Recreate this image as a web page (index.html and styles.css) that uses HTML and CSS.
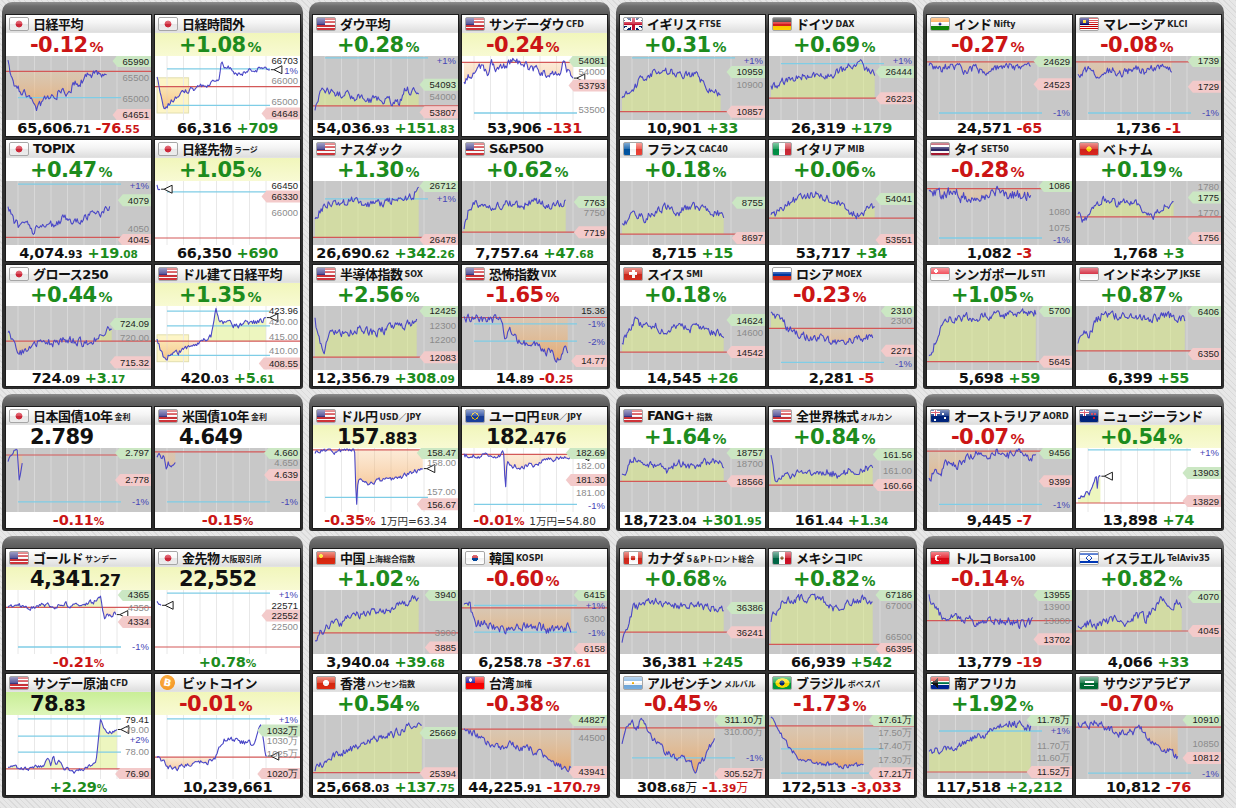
FILE: index.html
```html
<!DOCTYPE html>
<html lang="ja">
<head>
<meta charset="utf-8">
<title>世界の株価</title>
<link rel="stylesheet" href="styles.css">
</head>
<body>
<main class="board">

<section class="sec">
  <div class="grp">
    <div class="card"><h3 class="ttl"><span class="fl f-jp"></span>日経平均</h3><p class="hd"><b class="dn">-0.12<i>%</i></b></p>
      <div class="ch" data-a="0:8 4:40 10:55 18:62 25:85 32:70 38:62 42:65 45:55 52:60 58:45 65:40 72:30 78:25 84:30 88:28" data-r="24" data-y="65" data-f="1" data-l="65990@8h 65500@33m 65000@66m 64651@93l"></div>
      <p class="bt"><b>65,606<i>.71</i></b> <b class="dn">-76<i>.55</i></b></p></div>
    <div class="card"><h3 class="ttl"><span class="fl f-jp"></span>日経時間外</h3><p class="hd y"><b class="up">+1.08<i>%</i></b></p>
      <div class="ch w" data-a="0:33 3:60 6:84 12:72 20:60 30:52 45:45 55:40 57:8 60:20 63:12 68:28 75:30 80:22 90:21 100:20" data-n="3" data-r="48" data-y="20,77" data-m="1" data-b="0,28,34,89" data-f="d" data-l="66703@5k 1%@22p 66000@39m 65000@71m 64648@90l"></div>
      <p class="bt"><b>66,316</b> <b class="up">+709</b></p></div>
    <div class="card"><h3 class="ttl"><span class="fl f-jp"></span>TOPIX</h3><p class="hd"><b class="up">+0.47<i>%</i></b></p>
      <div class="ch" data-a="0:40 5:62 10:72 15:62 22:78 30:65 40:70 50:58 60:62 70:55 80:50 90:45" data-r="88" data-y="5" data-l="+1%@4p 4079@30h 4050@74m 4045@93l"></div>
      <p class="bt"><b>4,074<i>.93</i></b> <b class="up">+19<i>.08</i></b></p></div>
    <div class="card"><h3 class="ttl"><span class="fl f-jp"></span>日経先物<small>ラージ</small></h3><p class="hd y"><b class="up">+1.05<i>%</i></b></p>
      <div class="ch w" data-a="0:6 1:14 3:12" data-n="1" data-r="89" data-y="17" data-m="1" data-l="66450@6k 66330@24l 66000@50m"></div>
      <p class="bt"><b>66,350</b> <b class="up">+690</b></p></div>
    <div class="card"><h3 class="ttl"><span class="fl f-jp"></span>グロース250</h3><p class="hd"><b class="up">+0.44<i>%</i></b></p>
      <div class="ch" data-a="0:40 6:65 12:72 20:60 30:55 40:58 50:50 60:55 70:60 78:50 85:42 92:32" data-r="55" data-f="1" data-l="724.09@28h 720.00@50m 715.32@88l"></div>
      <p class="bt"><b>724<i>.09</i></b> <b class="up">+3<i>.17</i></b></p></div>
    <div class="card"><h3 class="ttl"><span class="fl f-us"></span>ドル建て日経平均</h3><p class="hd y"><b class="up">+1.35<i>%</i></b></p>
      <div class="ch w" data-a="0:50 3:70 7:87 12:75 20:72 30:62 40:55 48:45 50:30 52:3 55:25 60:28 70:30 80:27 90:25 97:21" data-n="3.5" data-r="55" data-y="8,31,77" data-f="1" data-m="1" data-b="0,28,45,87" data-l="423.96@4k 420.00@24m 415.00@48m 410.00@70m 408.55@90l"></div>
      <p class="bt"><b>420<i>.03</i></b> <b class="up">+5<i>.61</i></b></p></div>
  </div>

  <div class="grp">
    <div class="card"><h3 class="ttl"><span class="fl f-us"></span>ダウ平均</h3><p class="hd"><b class="up">+0.28<i>%</i></b></p>
      <div class="ch" data-a="0:82 3:65 8:55 15:58 30:62 45:68 60:70 75:74 80:52 88:56 92:58" data-r="78" data-y="3" data-f="1" data-l="+1%@3p 54093@45h 54000@63m 53807@88l"></div>
      <p class="bt"><b>54,036<i>.93</i></b> <b class="up">+151<i>.83</i></b></p></div>
    <div class="card"><h3 class="ttl"><span class="fl f-us"></span>サンデーダウ<small>CFD</small></h3><p class="hd y"><b class="dn">-0.24<i>%</i></b></p>
      <div class="ch w" data-a="0:37 8:25 14:20 17:9 20:30 24:12 30:20 38:15 45:6 55:15 65:22 77:30 85:25 88:12 92:25 97:30" data-n="5" data-r="10" data-y="89" data-f="1" data-m="1" data-l="54081@6h 54000@24m 53793@46l 53500@84m"></div>
      <p class="bt"><b>53,906</b> <b class="dn">-131</b></p></div>
    <div class="card"><h3 class="ttl"><span class="fl f-us"></span>ナスダック</h3><p class="hd"><b class="up">+1.30<i>%</i></b></p>
      <div class="ch" data-a="0:55 5:45 12:35 20:40 30:30 40:32 50:38 60:35 70:30 80:28 88:20 92:10" data-r="88" data-y="28" data-f="1" data-l="26712@6h +1%@28p 26478@92l"></div>
      <p class="bt"><b>26,690<i>.62</i></b> <b class="up">+342<i>.26</i></b></p></div>
    <div class="card"><h3 class="ttl"><span class="fl f-us"></span>S&amp;P500</h3><p class="hd"><b class="up">+0.62<i>%</i></b></p>
      <div class="ch" data-a="0:70 5:40 12:35 20:45 30:40 40:35 50:42 60:30 70:35 80:38 90:32" data-r="80" data-f="1" data-l="7763@33h 7750@50m 7719@80l"></div>
      <p class="bt"><b>7,757<i>.64</i></b> <b class="up">+47<i>.68</i></b></p></div>
    <div class="card"><h3 class="ttl"><span class="fl f-us"></span>半導体指数<small>SOX</small></h3><p class="hd"><b class="up">+2.56<i>%</i></b></p>
      <div class="ch" data-a="0:12 3:55 8:68 12:45 20:40 30:42 40:35 50:40 60:38 70:33 80:30 90:22" data-n="5.5" data-r="80" data-f="1" data-l="12425@6h 12300@30m 12200@53m 12083@80l"></div>
      <p class="bt"><b>12,356<i>.79</i></b> <b class="up">+308<i>.09</i></b></p></div>
    <div class="card"><h3 class="ttl"><span class="fl f-us"></span>恐怖指数<small>VIX</small></h3><p class="hd"><b class="dn">-1.65<i>%</i></b></p>
      <div class="ch" data-a="0:22 10:18 20:25 30:15 34:20 36:55 40:35 45:50 55:58 65:62 75:72 82:80 88:68 92:70" data-n="5.5" data-r="18" data-y="28,55" data-f="1" data-l="15.36@3k -1%@28p -2%@55p 14.77@86l"></div>
      <p class="bt"><b>14<i>.89</i></b> <b class="dn">-0<i>.25</i></b></p></div>
  </div>

  <div class="grp">
    <div class="card"><h3 class="ttl"><span class="fl f-gb"></span>イギリス<small>FTSE</small></h3><p class="hd"><b class="up">+0.31<i>%</i></b></p>
      <div class="ch" data-a="0:70 8:55 15:40 25:28 35:22 45:25 55:30 65:28 72:40 80:55 88:58" data-r="87" data-y="3" data-f="1" data-l="+1%@3p 10959@25h 10900@45m 10857@87l"></div>
      <p class="bt"><b>10,901</b> <b class="up">+33</b></p></div>
    <div class="card"><h3 class="ttl"><span class="fl f-de"></span>ドイツ<small>DAX</small></h3><p class="hd"><b class="up">+0.69<i>%</i></b></p>
      <div class="ch" data-a="0:50 8:40 20:35 35:28 50:30 60:25 70:15 78:10 85:25 92:30" data-r="66" data-y="12" data-f="1" data-l="+1%@5p 26444@25h 26223@66l"></div>
      <p class="bt"><b>26,319</b> <b class="up">+179</b></p></div>
    <div class="card"><h3 class="ttl"><span class="fl f-fr"></span>フランス<small>CAC40</small></h3><p class="hd"><b class="up">+0.18<i>%</i></b></p>
      <div class="ch" data-a="0:70 10:50 20:58 30:45 40:42 50:50 60:38 70:45 80:48 90:52" data-r="83" data-f="1" data-l="8755@34h 8697@89l"></div>
      <p class="bt"><b>8,715</b> <b class="up">+15</b></p></div>
    <div class="card"><h3 class="ttl"><span class="fl f-it"></span>イタリア<small>MIB</small></h3><p class="hd"><b class="up">+0.06<i>%</i></b></p>
      <div class="ch" data-a="0:55 10:45 20:30 30:25 40:20 50:28 60:35 70:50 78:55 85:45 92:40" data-r="58" data-f="1" data-l="54041@28h 53551@92l"></div>
      <p class="bt"><b>53,717</b> <b class="up">+34</b></p></div>
    <div class="card"><h3 class="ttl"><span class="fl f-ch"></span>スイス<small>SMI</small></h3><p class="hd"><b class="up">+0.18<i>%</i></b></p>
      <div class="ch" data-a="0:60 5:40 12:20 20:35 30:30 40:45 50:28 60:35 70:30 80:40 90:45" data-r="72" data-f="1" data-l="14624@22h 14600@41m 14542@72l"></div>
      <p class="bt"><b>14,545</b> <b class="up">+26</b></p></div>
    <div class="card"><h3 class="ttl"><span class="fl f-ru"></span>ロシア<small>MOEX</small></h3><p class="hd"><b class="dn">-0.23<i>%</i></b></p>
      <div class="ch" data-a="0:10 8:20 15:35 25:45 40:50 55:55 65:58 75:52 85:48 90:50" data-r="35" data-y="88" data-f="1" data-l="2310@5h 2300@23m 2271@70l -1%@90p"></div>
      <p class="bt"><b>2,281</b> <b class="dn">-5</b></p></div>
  </div>

  <div class="grp">
    <div class="card"><h3 class="ttl"><span class="fl f-in"></span>インド<small>Nifty</small></h3><p class="hd"><b class="dn">-0.27<i>%</i></b></p>
      <div class="ch" data-a="0:15 10:20 20:15 30:22 40:18 50:25 60:20 70:15 80:22 90:15" data-r="9" data-y="89" data-f="1" data-l="24629@8h 24523@44l -1%@89p"></div>
      <p class="bt"><b>24,571</b> <b class="dn">-65</b></p></div>
    <div class="card"><h3 class="ttl"><span class="fl f-my"></span>マレーシア<small>KLCI</small></h3><p class="hd"><b class="dn">-0.08<i>%</i></b></p>
      <div class="ch" data-a="0:28 10:20 20:30 30:22 40:28 50:20 60:25 70:18 80:20 83:18" data-r="9" data-y="89" data-f="1" data-l="1739@5h 1729@48l -1%@89p"></div>
      <p class="bt"><b>1,736</b> <b class="dn">-1</b></p></div>
    <div class="card"><h3 class="ttl"><span class="fl f-th"></span>タイ<small>SET50</small></h3><p class="hd"><b class="dn">-0.28<i>%</i></b></p>
      <div class="ch" data-a="0:14 10:22 20:18 30:25 40:20 50:22 60:18 70:22 80:20 90:22" data-n="7" data-r="12" data-y="89" data-f="1" data-l="1086@6h 1080@47m 1075@72m -1%@91p"></div>
      <p class="bt"><b>1,082</b> <b class="dn">-3</b></p></div>
    <div class="card"><h3 class="ttl"><span class="fl f-vn"></span>ベトナム</h3><p class="hd"><b class="up">+0.19<i>%</i></b></p>
      <div class="ch" data-a="0:50 5:65 10:60 15:35 25:28 35:35 45:30 55:40 62:50 68:55 75:40 82:35 85:38" data-r="56" data-f="1" data-l="1780@8m 1775@26h 1770@50m 1756@89l"></div>
      <p class="bt"><b>1,768</b> <b class="up">+3</b></p></div>
    <div class="card"><h3 class="ttl"><span class="fl f-sg"></span>シンガポール<small>STI</small></h3><p class="hd"><b class="up">+1.05<i>%</i></b></p>
      <div class="ch" data-a="0:75 4:65 8:40 12:22 20:20 35:18 50:16 65:15 80:12 95:10" data-r="87" data-f="1" data-l="5700@5h 5645@87l"></div>
      <p class="bt"><b>5,698</b> <b class="up">+59</b></p></div>
    <div class="card"><h3 class="ttl"><span class="fl f-id"></span>インドネシア<small>JKSE</small></h3><p class="hd"><b class="up">+0.87<i>%</i></b></p>
      <div class="ch" data-a="0:55 5:35 10:45 15:25 22:12 35:15 50:18 65:20 80:15 90:20 95:22" data-r="70" data-f="1" data-l="6406@8h 6350@75l"></div>
      <p class="bt"><b>6,399</b> <b class="up">+55</b></p></div>
  </div>
</section>

<section class="sec">
  <div class="grp">
    <div class="card"><h3 class="ttl"><span class="fl f-jp"></span>日本国債10年<small>金利</small></h3><p class="hd"><b class="k">2.789</b></p>
      <div class="ch" data-a="0:20 5:5 8:0 10:50 12:30 13:20" data-n="1.5" data-r="11" data-y="84" data-f="1" data-l="2.797@5h 2.778@50l -1%@84p"></div>
      <p class="bt"><b class="dn">-0.11<i>%</i></b></p></div>
    <div class="card"><h3 class="ttl"><span class="fl f-us"></span>米国債10年<small>金利</small></h3><p class="hd"><b class="k">4.649</b></p>
      <div class="ch" data-a="0:12 2:5 4:15 6:8 8:35 10:22 12:30 14:25 17:20" data-n="2.5" data-r="6" data-y="84" data-f="1" data-l="4.660@5h 4.650@22m 4.639@42l -1%@84p"></div>
      <p class="bt"><b class="dn">-0.15<i>%</i></b></p></div>
  </div>
  <div class="grp">
    <div class="card"><h3 class="ttl"><span class="fl f-us"></span>ドル円<small>USD／JPY</small></h3><p class="hd y"><b class="k">157<small>.883</small></b></p>
      <div class="ch w" data-a="0:5 10:4 20:6 30:3 35:5 36:60 37:88 38:45 40:50 45:55 55:52 65:48 75:50 80:40 90:36 96:32" data-n="3" data-r="3" data-y="77" data-f="1" data-m="1" data-l="158.47@3h 158.00@22m 157.00@68m 156.67@88l"></div>
      <p class="bt"><b class="dn">-0.35<i>%</i></b> <span class="fx">1万円=63.34</span></p></div>
    <div class="card"><h3 class="ttl"><span class="fl f-eu"></span>ユーロ円<small>EUR／JPY</small></h3><p class="hd y"><b class="k">182<small>.476</small></b></p>
      <div class="ch w" data-a="0:12 10:13 20:11 30:12 35:8 36:40 37:60 38:18 42:28 50:30 58:26 62:28 70:18 80:17 90:14 100:12" data-n="3" data-r="10" data-y="88" data-f="1" data-m="1" data-l="182.69@4h 182.00@27m 181.30@50l 181.00@69m -1%@90p"></div>
      <p class="bt"><b class="dn">-0.01<i>%</i></b> <span class="fx">1万円=54.80</span></p></div>
  </div>
  <div class="grp">
    <div class="card"><h3 class="ttl"><span class="fl f-us"></span>FANG+<small>指数</small></h3><p class="hd"><b class="up">+1.64<i>%</i></b></p>
      <div class="ch" data-a="0:45 5:30 10:15 20:25 30:30 40:35 50:22 60:30 70:25 80:20 90:28" data-n="5" data-r="52" data-f="1" data-l="18757@5h 18700@24m 18566@52l"></div>
      <p class="bt"><b>18,723<i>.04</i></b> <b class="up">+301<i>.95</i></b></p></div>
    <div class="card"><h3 class="ttl"><span class="fl f-us"></span>全世界株式<small>オルカン</small></h3><p class="hd"><b class="up">+0.84<i>%</i></b></p>
      <div class="ch" data-a="0:15 4:50 10:45 20:42 30:40 40:45 50:38 60:42 70:35 80:30 90:32" data-r="58" data-f="1" data-l="161.56@10h 161.00@35m 160.66@58l"></div>
      <p class="bt"><b>161<i>.44</i></b> <b class="up">+1<i>.34</i></b></p></div>
  </div>
  <div class="grp">
    <div class="card"><h3 class="ttl"><span class="fl f-au"></span>オーストラリア<small>AORD</small></h3><p class="hd"><b class="dn">-0.07<i>%</i></b></p>
      <div class="ch" data-a="0:50 5:35 10:40 15:25 20:20 25:30 30:22 40:8 50:10 60:6 70:12 80:6 88:15 95:12" data-r="5" data-y="88" data-f="1" data-l="9456@5h 9399@52l -1%@88p"></div>
      <p class="bt"><b>9,445</b> <b class="dn">-7</b></p></div>
    <div class="card"><h3 class="ttl"><span class="fl f-nz"></span>ニュージーランド</h3><p class="hd y"><b class="up">+0.54<i>%</i></b></p>
      <div class="ch w" data-a="0:80 5:75 8:70 10:72 12:60 14:50 16:42 17:65 18:45 20:42" data-n="3" data-r="86" data-y="3" data-f="1" data-m="1" data-l="+1%@3p 13903@39h 13829@83l"></div>
      <p class="bt"><b>13,898</b> <b class="up">+74</b></p></div>
  </div>
</section>

<section class="sec">
  <div class="grp">
    <div class="card"><h3 class="ttl"><span class="fl f-us"></span>ゴールド<small>サンデー</small></h3><p class="hd y"><b class="k">4,341<small>.27</small></b></p>
      <div class="ch w" data-a="0:28 10:25 20:27 30:24 40:26 50:22 60:24 70:20 78:18 82:5 84:30 86:45 88:40 92:38 96:36" data-n="3" data-r="27" data-y="89" data-f="1" data-m="1" data-l="4365@5h 4350@27m 4334@50l -1%@89p"></div>
      <p class="bt"><b class="dn">-0.21<i>%</i></b></p></div>
    <div class="card"><h3 class="ttl"><span class="fl f-jp"></span>金先物<small>大阪取引所</small></h3><p class="hd y"><b class="k">22,552</b></p>
      <div class="ch w" data-a="0:18 2:22 4:24" data-n="0.8" data-r="89" data-y="5" data-m="1" data-l="+1%@3p 22571@24k 22552@40l 22500@57m"></div>
      <p class="bt"><b class="up">+0.78<i>%</i></b></p></div>
    <div class="card"><h3 class="ttl"><span class="fl f-us"></span>サンデー原油<small>CFD</small></h3><p class="hd gn"><b class="k">78<small>.83</small></b></p>
      <div class="ch w" data-a="0:82 5:80 10:84 15:82 20:85 25:78 30:80 35:70 38:78 40:66 43:80 46:72 50:84 58:88 65:87 70:82 75:80 78:70 80:35 82:6 84:20 88:25 92:27 97:25" data-n="2.5" data-r="84" data-y="6,33,58" data-f="u" data-m="1" data-l="79.41@5k 79.00@22m +2%@39p 78.00@57m 76.90@92l"></div>
      <p class="bt"><b class="up">+2.29<i>%</i></b></p></div>
    <div class="card"><h3 class="ttl"><span class="fl f-btc">B</span>ビットコイン</h3><p class="hd y"><b class="dn">-0.01<i>%</i></b></p>
      <div class="ch w" data-a="0:66 5:75 10:82 14:87 20:80 30:78 40:74 48:70 52:68 55:45 58:40 65:38 75:42 85:45 88:30 92:19 95:55 98:69" data-n="3.5" data-r="66" data-y="6" data-f="d" data-m="1" data-l="+1%@3p 1032万@24h 1030万@40m 1025万@60m 1020万@92l"></div>
      <p class="bt"><b>10,239,661</b></p></div>
  </div>
  <div class="grp">
    <div class="card"><h3 class="ttl"><span class="fl f-cn"></span>中国<small>上海総合指数</small></h3><p class="hd"><b class="up">+1.02<i>%</i></b></p>
      <div class="ch" data-a="0:78 5:65 10:60 15:55 25:50 35:40 45:35 55:38 65:30 75:25 85:15 92:8" data-r="67" data-f="1" data-l="3940@5h 3900@67m 3885@90l"></div>
      <p class="bt"><b>3,940<i>.04</i></b> <b class="up">+39<i>.68</i></b></p></div>
    <div class="card"><h3 class="ttl"><span class="fl f-kr"></span>韓国<small>KOSPI</small></h3><p class="hd"><b class="dn">-0.60<i>%</i></b></p>
      <div class="ch" data-a="0:20 5:25 10:55 15:50 25:58 35:62 45:55 55:60 65:58 75:62 85:55 95:60" data-n="6" data-r="28" data-y="24,66" data-f="1" data-l="6415@5h +1%@24p 6300@44m -1%@66p 6158@92l"></div>
      <p class="bt"><b>6,258<i>.78</i></b> <b class="dn">-37<i>.61</i></b></p></div>
    <div class="card"><h3 class="ttl"><span class="fl f-hk"></span>香港<small>ハンセン指数</small></h3><p class="hd"><b class="up">+0.54<i>%</i></b></p>
      <div class="ch" data-a="0:85 10:75 20:60 30:55 40:45 50:40 60:35 70:30 80:22 90:12 95:8" data-r="90" data-f="1" data-l="25669@28h 25394@91l"></div>
      <p class="bt"><b>25,668<i>.03</i></b> <b class="up">+137<i>.75</i></b></p></div>
    <div class="card"><h3 class="ttl"><span class="fl f-tw"></span>台湾<small>加権</small></h3><p class="hd"><b class="dn">-0.38<i>%</i></b></p>
      <div class="ch" data-a="0:18 10:30 20:45 30:52 40:48 50:52 60:55 70:62 80:75 88:82 95:78" data-r="22" data-f="1" data-l="44827@6h 44500@36m 43941@89l"></div>
      <p class="bt"><b>44,225<i>.91</i></b> <b class="dn">-170<i>.79</i></b></p></div>
  </div>
  <div class="grp">
    <div class="card"><h3 class="ttl"><span class="fl f-ca"></span>カナダ<small>S＆Pトロント総合</small></h3><p class="hd"><b class="up">+0.68<i>%</i></b></p>
      <div class="ch" data-a="0:78 5:55 10:28 20:22 30:18 40:22 50:25 60:20 70:25 80:28 90:30" data-r="66" data-f="1" data-l="36386@28h 36241@66l"></div>
      <p class="bt"><b>36,381</b> <b class="up">+245</b></p></div>
    <div class="card"><h3 class="ttl"><span class="fl f-mx"></span>メキシコ<small>IPC</small></h3><p class="hd"><b class="up">+0.82<i>%</i></b></p>
      <div class="ch" data-a="0:45 5:35 10:20 20:15 30:12 40:15 50:18 55:30 60:28 70:20 80:15 90:18" data-r="85" data-f="1" data-l="67186@5h 67000@25m 66500@73m 66395@92l"></div>
      <p class="bt"><b>66,939</b> <b class="up">+542</b></p></div>
    <div class="card"><h3 class="ttl"><span class="fl f-ar"></span>アルゼンチン<small>メルバル</small></h3><p class="hd"><b class="dn">-0.45<i>%</i></b></p>
      <div class="ch" data-a="0:40 4:15 8:8 12:20 16:12 20:10 25:30 30:40 38:55 45:65 52:68 58:72 65:85 70:78 76:55 82:35" data-n="4.5" data-r="20" data-y="67" data-f="1" data-l="311.10万@6h 310.00万@26m -1%@67p 305.52万@92l"></div>
      <p class="bt"><b>308<i>.68</i><span class="u">万</span></b> <b class="dn">-1<i>.39</i><span class="u">万</span></b></p></div>
    <div class="card"><h3 class="ttl"><span class="fl f-br"></span>ブラジル<small>ボベスパ</small></h3><p class="hd"><b class="dn">-1.73<i>%</i></b></p>
      <div class="ch" data-a="0:6 3:10 8:30 14:45 20:58 25:68 35:72 45:75 55:78 65:80 75:79 82:80" data-n="3" data-r="17" data-y="53,91" data-f="1" data-l="17.61万@6h 17.50万@27m 17.40万@48m 17.30万@69m 17.21万@91l"></div>
      <p class="bt"><b>172,513</b> <b class="dn">-3,033</b></p></div>
  </div>
  <div class="grp">
    <div class="card"><h3 class="ttl"><span class="fl f-tr"></span>トルコ<small>Borsa100</small></h3><p class="hd"><b class="dn">-0.14<i>%</i></b></p>
      <div class="ch" data-a="0:12 5:20 10:38 20:42 30:45 40:48 50:45 60:50 70:48 80:55 88:52 92:50" data-n="5.5" data-r="48" data-f="1" data-l="13955@5h 13900@26m 13800@48m 13702@77l"></div>
      <p class="bt"><b>13,779</b> <b class="dn">-19</b></p></div>
    <div class="card"><h3 class="ttl"><span class="fl f-il"></span>イスラエル<small>TelAviv35</small></h3><p class="hd"><b class="up">+0.82<i>%</i></b></p>
      <div class="ch" data-a="0:60 10:50 20:55 30:45 40:55 50:40 60:45 70:20 75:12 80:25 88:20 92:28" data-n="5.5" data-r="64" data-f="1" data-l="4070@11h 4045@64l"></div>
      <p class="bt"><b>4,066</b> <b class="up">+33</b></p></div>
    <div class="card"><h3 class="ttl"><span class="fl f-za"></span>南アフリカ</h3><p class="hd"><b class="up">+1.92<i>%</i></b></p>
      <div class="ch" data-a="0:60 10:55 20:50 30:42 40:35 50:30 60:20 68:10 75:14 85:18 90:20" data-r="89" data-y="25" data-f="1" data-l="11.78万@6h +1%@25p 11.70万@47m 11.60万@66m 11.52万@89l"></div>
      <p class="bt"><b>117,518</b> <b class="up">+2,212</b></p></div>
    <div class="card"><h3 class="ttl"><span class="fl f-sa"></span>サウジアラビア</h3><p class="hd"><b class="dn">-0.70<i>%</i></b></p>
      <div class="ch" data-a="0:14 5:12 10:16 15:10 20:15 25:20 30:24 38:30 45:28 52:25 56:22 60:32 66:40 72:52 78:55 84:60 89:67" data-n="4.5" data-r="19" data-y="91" data-f="d" data-l="10910@6h 10850@44m 10812@67l -1%@91p"></div>
      <p class="bt"><b>10,812</b> <b class="dn">-76</b></p></div>
  </div>
</section>

</main>
<script src="app.js"></script>
</body>
</html>
```

FILE: styles.css
```css
* { box-sizing: border-box; }
html, body { margin: 0; }
body {
  padding: 2px 0 0 2px;
  min-height: 808px;
  overflow: hidden;
  color: #111;
  font-family: "DejaVu Sans", "Noto Sans CJK JP", sans-serif;
  background-color: #e7e7e7;
  background-image: repeating-linear-gradient(45deg, #dadada 0 1px, transparent 1px 4px);
}
.board { display: flex; flex-direction: column; gap: 5px; }
.sec { display: flex; gap: 6px; }
.grp {
  width: 301px;
  padding: 12px 2px 2px 3px;
  display: grid;
  grid-template-columns: 147px 147px;
  gap: 2px;
  border-radius: 10px 10px 3px 3px;
  background: linear-gradient(#909090, #6e6e6e 4px, #5a5a5a 12px, #343434 28px, #2b2b2b);
}
.card {
  height: 123px;
  border: 1px solid #1c1c1c;
  background: #fff;
  display: flex;
  flex-direction: column;
  overflow: hidden;
}
.ttl {
  margin: 0;
  height: 18px;
  flex: none;
  display: flex;
  align-items: center;
  gap: 4px;
  padding-left: 3px;
  background: linear-gradient(#ffffff, #f4f4f4 45%, #dedede);
  border-bottom: 1px solid #e2e2e2;
  font-size: 13px;
  font-weight: bold;
  letter-spacing: -0.5px;
  white-space: nowrap;
  color: #111;
}
.ttl small {
  font-size: 8px;
  letter-spacing: 0;
  margin-left: -2px;
  padding-top: 2px;
  color: #222;
}
.hd {
  margin: 0;
  height: 23px;
  flex: none;
  padding-left: 24px;
  font-size: 21px;
  font-weight: bold;
  letter-spacing: -0.6px;
  line-height: 24px;
  white-space: nowrap;
}
.hd i { font-style: normal; font-size: 14px; letter-spacing: 0; margin-left: 2px; }
.hd small { font-size: 16px; letter-spacing: -0.3px; }
.hd.y { background: linear-gradient(#f1f6bb, #f8fad3); }
.hd.gn { background: linear-gradient(#c9ee97, #def6b9); }
.k { color: #111; }
.up { color: #1d8c1d; }
.dn { color: #cb1515; }
.ch { height: 64px; flex: none; background: #c8c8c8; }
.ch.w { background: #fff; }
.ch svg { display: block; overflow: hidden; }
.ch text { font-family: "Liberation Sans", Arial, sans-serif; font-size: 9.5px; }
.gv { stroke: #d8d8d8; stroke-width: 1; }
.w .gv { stroke: #e8e8e8; }
.rd { stroke: #d35858; stroke-width: 1.2; }
.cy { stroke: #7fcde6; stroke-width: 1.3; }
.ln { fill: none; stroke: #4a47c7; stroke-width: 1.1; stroke-linejoin: round; }
.fu { fill: #dcee80; opacity: 0.5; }
.yb { fill: #fdf5c6; stroke: #e2deae; stroke-width: 1; }
.mk { fill: #fff; stroke: #1e1e1e; stroke-width: 1; }
.bh { fill: #cbe7c3; }
.bl { fill: #f3caca; }
.th, .tl, .tk { fill: #1e1e1e; }
.tm { fill: #8b8b8b; }
.tp { fill: #4646b6; }
.bt {
  margin: 0;
  height: 16px;
  flex: none;
  text-align: center;
  font-size: 14.5px;
  font-weight: bold;
  line-height: 16px;
  letter-spacing: -0.2px;
  white-space: nowrap;
}
.bt i { font-style: normal; font-size: 10.5px; letter-spacing: 0; }
.bt .u { font-size: 12px; font-weight: normal; }
.bt .fx { font-size: 10.5px; font-weight: normal; color: #333; letter-spacing: 0; }

/* flags */
.fl {
  flex: none;
  width: 20px;
  height: 14px;
  border: 1px solid #a6a6a6;
  border-radius: 2px;
  position: relative;
  overflow: hidden;
  background-color: #fff;
}
.fl::after {
  content: "";
  position: absolute;
  inset: 0;
  background: linear-gradient(rgba(255,255,255,.5), rgba(255,255,255,.15) 50%, rgba(0,0,0,.06) 51%, rgba(0,0,0,0));
}
.f-jp { background: radial-gradient(circle at 50% 50%, #d42a3c 0 3.2px, rgba(255,255,255,0) 3.7px), linear-gradient(#fff, #ececec); }
.f-us { background: linear-gradient(#3d3b8a, #3d3b8a) 0 0 / 8px 7px no-repeat, repeating-linear-gradient(#d0343a 0 1.7px, #fff 1.7px 3.4px); }
.f-gb {
  background:
    linear-gradient(90deg, transparent 8px, #c8102e 8px 11px, transparent 11px),
    linear-gradient(transparent 4.5px, #c8102e 4.5px 7.5px, transparent 7.5px),
    linear-gradient(90deg, transparent 7px, #fff 7px 12px, transparent 12px),
    linear-gradient(transparent 3.5px, #fff 3.5px 8.5px, transparent 8.5px),
    linear-gradient(33deg, transparent 44%, #fff 44% 56%, transparent 56%),
    linear-gradient(-33deg, transparent 44%, #fff 44% 56%, transparent 56%),
    #012169;
}
.f-de { background: linear-gradient(#111 0 33.3%, #dd1d1d 33.3% 66.6%, #ffce00 66.6%); }
.f-in { background: radial-gradient(circle, #1a237e 0 1.3px, transparent 1.7px), linear-gradient(#ff9933 0 33.3%, #fff 33.3% 66.6%, #138808 66.6%); }
.f-my { background: radial-gradient(circle at 4.5px 3.5px, #fc0 0 1.6px, transparent 1.9px), linear-gradient(#010066, #010066) 0 0 / 9px 7px no-repeat, repeating-linear-gradient(#cc0001 0 1px, #fff 1px 2px); }
.f-fr { background: linear-gradient(90deg, #0055a4 33.3%, #fff 33.3% 66.6%, #ef4135 66.6%); }
.f-it { background: linear-gradient(90deg, #009246 33.3%, #fff 33.3% 66.6%, #ce2b37 66.6%); }
.f-th { background: linear-gradient(#a51931 0 16.6%, #fff 16.6% 33.3%, #2d2a6a 33.3% 66.6%, #fff 66.6% 83.3%, #a51931 83.3%); }
.f-vn { background: radial-gradient(circle, #ffde00 0 2.4px, transparent 2.8px), #da251d; }
.f-ch { background: linear-gradient(#fff, #fff) center / 3px 8px no-repeat, linear-gradient(#fff, #fff) center / 8px 3px no-repeat, #d52b1e; }
.f-ru { background: linear-gradient(#fff 0 33.3%, #0039a6 33.3% 66.6%, #d52b1e 66.6%); }
.f-sg { background: radial-gradient(circle at 5px 3px, #fff 0 1.8px, transparent 2.1px), linear-gradient(#ef3340 50%, #fff 50%); }
.f-id { background: linear-gradient(#ce1126 50%, #fff 50%); }
.f-eu { background: radial-gradient(circle, transparent 0 2.6px, #fc0 2.7px 3.5px, transparent 3.6px), #1a3f9c; }
.f-au {
  background:
    radial-gradient(circle at 14px 8px, #fff 0 1px, transparent 1.3px),
    radial-gradient(circle at 12px 4px, #fff 0 0.8px, transparent 1.1px),
    radial-gradient(circle at 4px 10px, #fff 0 1.2px, transparent 1.5px),
    linear-gradient(#c8102e, #c8102e) 4px 0 / 1px 6px no-repeat,
    linear-gradient(#c8102e, #c8102e) 0 2.5px / 9px 1px no-repeat,
    linear-gradient(#fff, #fff) 3px 0 / 3px 6px no-repeat,
    linear-gradient(#fff, #fff) 0 1.5px / 9px 3px no-repeat,
    #00247d;
}
.f-nz {
  background:
    radial-gradient(circle at 14px 8px, #cc142b 0 1px, transparent 1.3px),
    radial-gradient(circle at 12px 4px, #cc142b 0 0.9px, transparent 1.2px),
    radial-gradient(circle at 15px 4px, #cc142b 0 0.8px, transparent 1.1px),
    linear-gradient(#c8102e, #c8102e) 4px 0 / 1px 6px no-repeat,
    linear-gradient(#c8102e, #c8102e) 0 2.5px / 9px 1px no-repeat,
    linear-gradient(#fff, #fff) 3px 0 / 3px 6px no-repeat,
    linear-gradient(#fff, #fff) 0 1.5px / 9px 3px no-repeat,
    #00247d;
}
.f-cn { background: radial-gradient(circle at 4px 4px, #ffde00 0 1.8px, transparent 2.2px), #de2910; }
.f-kr { background: radial-gradient(circle, transparent 0 3.2px, #fff 3.5px), linear-gradient(#cd2e3a 50%, #0047a0 50%); }
.f-ca { background: radial-gradient(circle, #d52b1e 0 2.2px, transparent 2.6px), linear-gradient(90deg, #d52b1e 25%, #fff 25% 75%, #d52b1e 75%); }
.f-mx { background: radial-gradient(circle, #8a5a2b 0 1.4px, transparent 1.8px), linear-gradient(90deg, #006847 33.3%, #fff 33.3% 66.6%, #ce1126 66.6%); }
.f-tr { background: radial-gradient(circle at 8.6px 6px, #e30a17 0 2.5px, transparent 2.8px), radial-gradient(circle at 7.3px 6px, #fff 0 3.2px, transparent 3.5px), #e30a17; }
.f-il { background: radial-gradient(circle, transparent 0 1.8px, #0038b8 2px 2.7px, transparent 2.9px), linear-gradient(#fff 0 1.2px, #0038b8 1.2px 2.7px, #fff 2.7px 9.3px, #0038b8 9.3px 10.8px, #fff 10.8px); }
.f-hk { background: radial-gradient(circle, #fff 0 2.8px, transparent 3.2px), #de2910; }
.f-tw { background: radial-gradient(circle at 4.5px 3px, #fff 0 1.6px, transparent 1.9px), linear-gradient(#000095, #000095) 0 0 / 9px 6px no-repeat, #fe0000; }
.f-ar { background: radial-gradient(circle, #f6b40e 0 1.2px, transparent 1.5px), linear-gradient(#74acdf 0 33.3%, #fff 33.3% 66.6%, #74acdf 66.6%); }
.f-br { background: radial-gradient(circle, #002776 0 2.4px, transparent 2.7px), radial-gradient(closest-side, #fedf00 0 88%, transparent 100%) center / 15px 10px no-repeat, #009c3b; }
.f-za {
  background:
    conic-gradient(from 0deg at 0 50%, transparent 0 55deg, #111 55deg 125deg, transparent 125deg) 0 0 / 7px 100% no-repeat,
    linear-gradient(#de3831 0 33%, #fff 33% 40%, #007a4d 40% 60%, #fff 60% 67%, #002395 67%);
}
.f-sa { background: linear-gradient(#fff, #fff) center 8px / 10px 1px no-repeat, linear-gradient(#fff, #fff) center 4px / 9px 2px no-repeat, #006c35; }
.fl.f-btc {
  width: 15px;
  height: 15px;
  margin: 0 3px 0 2px;
  border: none;
  border-radius: 50%;
  background: radial-gradient(circle at 40% 35%, #fbb04a, #f39018);
  color: #fff;
  font: bold 10px/15px "DejaVu Sans", sans-serif;
  text-align: center;
  letter-spacing: 0;
  transform: rotate(12deg);
}
.fl.f-btc::after { display: none; }
```

FILE: app.js
```js
(function () {
  var W = 145, H = 64, PX = 2, PW = 113;
  var seed = 1;
  function rnd() { seed = (seed * 16807) % 2147483647; return seed / 2147483647; }
  function clamp(v, a, b) { return Math.max(a, Math.min(b, v)); }
  function r1(v) { return Math.round(v * 10) / 10; }
  function tw(t) {
    var w = 0;
    for (var i = 0; i < t.length; i++) {
      var c = t.charAt(i);
      if (c >= '0' && c <= '9') w += 5.3;
      else if (c === '万') w += 9.5;
      else if (c === '%') w += 8.5;
      else if (c === '+') w += 5.5;
      else if (c === '-') w += 3.2;
      else w += 2.7;
    }
    return w;
  }
  function draw(el, idx) {
    seed = 48271 + idx * 7919;
    var d = el.dataset;
    var a = d.a.trim().split(/\s+/).map(function (s) { return s.split(':').map(Number); });
    var n = d.n ? +d.n : 5;
    var pts = [], nz = 0, k = 0, x0 = a[0][0], x1 = a[a.length - 1][0];
    for (var x = x0; x <= x1 + 0.01; x += 0.9) {
      while (k < a.length - 2 && x > a[k + 1][0]) k++;
      var A = a[k], B = a[k + 1];
      var t = B[0] === A[0] ? 1 : clamp((x - A[0]) / (B[0] - A[0]), 0, 1);
      var y = (A[1] + (B[1] - A[1]) * t) / 100 * H;
      nz = nz * 0.45 + (rnd() - 0.5) * n * 1.5;
      pts.push([r1(PX + x / 100 * PW), r1(clamp(y + nz, 1, H - 1))]);
    }
    var s = '<svg width="145" height="64" viewBox="0 0 145 64">';
    var ry = r1(d.r / 100 * H);
    s += '<defs><linearGradient id="go' + idx + '" gradientUnits="userSpaceOnUse" x1="0" y1="' + ry + '" x2="0" y2="64">' +
      '<stop offset="0" stop-color="#f6c48c" stop-opacity="0.35"/><stop offset="1" stop-color="#ee9440" stop-opacity="0.8"/></linearGradient></defs>';
    if (d.b) {
      var b = d.b.split(',').map(Number);
      s += '<rect class="yb" x="' + r1(PX + b[0] / 100 * PW) + '" y="' + r1(b[2] / 100 * H) + '" width="' + r1((b[1] - b[0]) / 100 * PW) + '" height="' + r1((b[3] - b[2]) / 100 * H) + '"/>';
    }
    for (var i = 0; i < 7; i++) {
      var gx = r1(12 + i * 16.5);
      s += '<line class="gv" x1="' + gx + '" y1="0" x2="' + gx + '" y2="64"/>';
    }
    var line = pts.map(function (p) { return p[0] + ',' + p[1]; }).join(' ');
    if (d.f) {
      var poly = line + ' ' + pts[pts.length - 1][0] + ',' + ry + ' ' + pts[0][0] + ',' + ry;
      if (d.f !== 'd') {
        s += '<clipPath id="cu' + idx + '"><rect x="0" y="0" width="145" height="' + ry + '"/></clipPath>';
        s += '<polygon class="fu" clip-path="url(#cu' + idx + ')" points="' + poly + '"/>';
      }
      if (d.f !== 'u') {
        s += '<clipPath id="cd' + idx + '"><rect x="0" y="' + ry + '" width="145" height="' + r1(H - ry) + '"/></clipPath>';
        s += '<polygon fill="url(#go' + idx + ')" clip-path="url(#cd' + idx + ')" points="' + poly + '"/>';
      }
    }
    (d.y ? d.y.split(',') : []).forEach(function (v) {
      var cy = r1(v / 100 * H);
      s += '<line class="cy" x1="12" y1="' + cy + '" x2="' + (PX + PW) + '" y2="' + cy + '"/>';
    });
    s += '<line class="rd" x1="0" y1="' + ry + '" x2="145" y2="' + ry + '"/>';
    s += '<polyline class="ln" points="' + line + '"/>';
    if (d.m) {
      var L = pts[pts.length - 1];
      s += '<path class="mk" d="M' + (L[0] + 1) + ' ' + L[1] + ' h3 M' + (L[0] + 4) + ' ' + L[1] + ' l8 -4 v8 z"/>';
    }
    (d.l ? d.l.trim().split(/\s+/) : []).forEach(function (tok) {
      var m = tok.match(/^(.*)@([\d.]+)([hlmpk])$/);
      if (!m) return;
      var txt = m[1], cy = r1(clamp(m[2] / 100 * H, 5, H - 5)), ty = m[3];
      if (ty === 'h' || ty === 'l') {
        var tip = r1(W - tw(txt) - 12);
        s += '<path class="b' + ty + '" d="M' + tip + ' ' + cy + ' l5 -6 H145 v12 H' + r1(tip + 5) + ' z"/>';
      }
      s += '<text class="t' + ty + '" x="143" y="' + r1(cy + 3.4) + '" text-anchor="end">' + txt + '</text>';
    });
    s += '</svg>';
    el.innerHTML = s;
  }
  var list = document.querySelectorAll('.ch');
  for (var j = 0; j < list.length; j++) draw(list[j], j);
})();
```
